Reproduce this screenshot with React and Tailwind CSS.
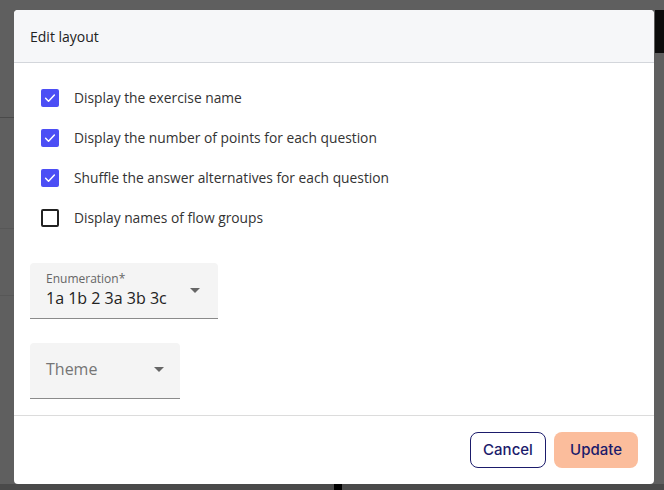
import React from "react";

function Check({ checked }) {
  if (checked) {
    return (
      <span className="flex h-[18px] w-[18px] items-center justify-center rounded-[2px] bg-[#4c4ef5]">
        <svg width="14" height="14" viewBox="0 0 24 24" fill="none">
          <path d="M4.5 12.5l5 5L19.5 7" stroke="#fff" strokeWidth="2.6" strokeLinecap="round" strokeLinejoin="round" />
        </svg>
      </span>
    );
  }
  return <span className="h-[18px] w-[18px] rounded-[2px] border-2 border-[#222]" />;
}

function Caret() {
  return (
    <svg width="10" height="5" viewBox="0 0 10 5">
      <path d="M0 0h10L5 5z" fill="#666" />
    </svg>
  );
}

export default function App() {
  const items = [
    ["Display the exercise name", true],
    ["Display the number of points for each question", true],
    ["Shuffle the answer alternatives for each question", true],
    ["Display names of flow groups", false],
  ];
  return (
    <div className="relative h-[490px] w-[664px] overflow-hidden bg-[#5f5f5f]" style={{ fontFamily: "'Open Sans', sans-serif" }}>
      <div className="absolute left-0 top-[117px] h-px w-[14px] bg-[#4a4a4a]" />
      <div className="absolute left-0 top-[228px] h-px w-[14px] bg-[#575757]" />
      <div className="absolute left-0 top-[295px] h-px w-[14px] bg-[#575757]" />
      <div className="absolute left-[655px] top-[10px] h-[43px] w-[9px] bg-[#0c0c0c]" />
      <div className="absolute left-0 top-[484px] h-[6px] w-[664px] bg-[#4a4a4a]" />
      <div className="absolute left-[334px] top-[484px] h-[6px] w-[8px] bg-[#000]" />
      <div className="relative ml-[14px] mt-[10px] flex h-[474px] w-[640px] flex-col overflow-hidden rounded-[4px] bg-white">
        <div className="flex h-[53px] items-center border-b border-[#d3d6db] bg-[#f6f7f9] px-4 text-[14px] text-[#222]">
          Edit layout
        </div>
        <div className="flex flex-col px-[27px] pt-[15px]">
          {items.map(([label, c]) => (
            <div key={label} className="flex h-[40px] items-center gap-[15px] text-[13.8px] text-[#333]">
              <Check checked={c} />
              <span>{label}</span>
            </div>
          ))}
        </div>
        <div className="flex flex-col gap-[24px] px-4 pt-[25px]">
          <div className="flex h-[56px] w-[188px] items-center justify-between rounded-t-[4px] border-b border-[#8a8a8a] bg-[#f4f4f4] pl-4 pr-[18px]">
            <div className="flex flex-col pb-[2px]">
              <span className="text-[12px] leading-[16px] text-[#666]">Enumeration*</span>
              <span className="text-[16px] leading-[22px] text-[#222]">1a 1b 2 3a 3b 3c</span>
            </div>
            <Caret />
          </div>
          <div className="flex h-[56px] w-[150px] items-center justify-between rounded-t-[4px] border-b border-[#8a8a8a] bg-[#f4f4f4] pb-[3px] pl-4 pr-[16px]">
            <span className="text-[16px] text-[#757575]">Theme</span>
            <Caret />
          </div>
        </div>
        <div className="mt-[16px] border-t border-[#dcdcdc]" />
        <div className="flex justify-end gap-2 px-4 pt-[16px]" style={{ fontFamily: "Inter, sans-serif" }}>
          <button className="h-[36px] w-[76px] rounded-[8px] border border-[#1b1b6b] text-[15px] font-medium text-[#1b1b6b]">Cancel</button>
          <button className="h-[36px] w-[84px] rounded-[8px] bg-[#fbbd9c] text-[15px] font-medium text-[#1b1b6b]">Update</button>
        </div>
      </div>
    </div>
  );
}
